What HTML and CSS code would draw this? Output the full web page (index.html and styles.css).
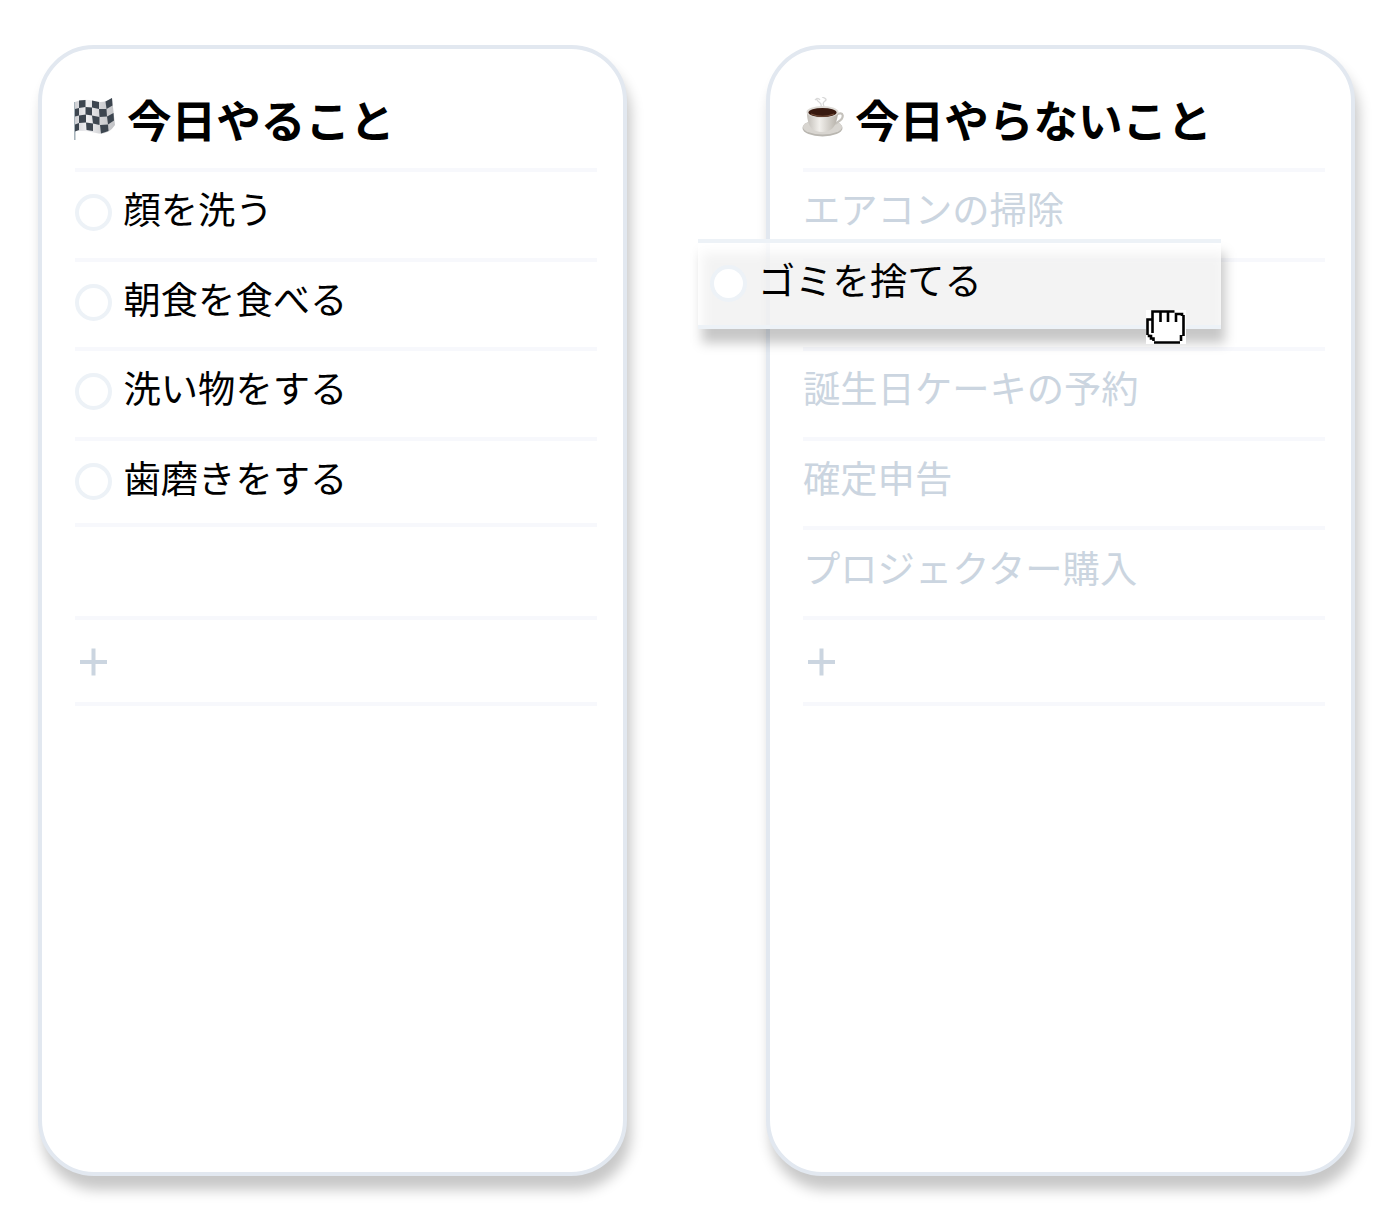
FILE: index.html
```
<!doctype html>
<html lang="ja">
<head>
    <meta charset="utf-8">
    <title>今日やること</title>
    <link rel="stylesheet" href="styles.css">
</head>
<body>
<div class="board">
    <div class="card">
        <h1 class="title">
            <svg class="emoji" viewBox="0 0 42 46">
                <defs>
                    <linearGradient id="cloth" x1="0" x2="1" y1="0" y2="0">
                        <stop offset="0" stop-color="#cfd0d4"/>
                        <stop offset=".3" stop-color="#f0f0f2"/>
                        <stop offset=".65" stop-color="#d2d3d6"/>
                        <stop offset="1" stop-color="#c2c3c6"/>
                    </linearGradient>
                </defs>
                <path d="M.8 5V43" stroke="#9eabb4" stroke-width="1.400"/>
                <path d="M1 5Q10 1 20 4T38 1L41 28Q34 39 22 36T1 34Z" fill="url(#cloth)"/>
                <g fill="#3d4650">
                    <path d="M5 3.500L11.500 3V10L5 11Z"/>
                    <path d="M18 3.500L25 5V12L18 10.500Z"/>
                    <path d="M31.500 4.500L38 1L38.500 8.500L32.500 12Z"/>
                    <path d="M1 12L5 11V18.500L1 19.500Z"/>
                    <path d="M11.500 10L18 10.500V18.500L11.500 17.500Z"/>
                    <path d="M25 12L32.500 12L33 19.500L25.500 20Z"/>
                    <path d="M5 18.500L12 17.500V25.500L5 26Z"/>
                    <path d="M18 18.500L25.500 20V28L19 26.500Z"/>
                    <path d="M33 19.500L39.500 16L40 23.500L34 27.500Z"/>
                    <path d="M1 27.500L5 26V33L1 34.500Z"/>
                    <path d="M12 25.500L19 26.500V34L12.500 33Z"/>
                    <path d="M26 28L34 27.500L34.500 34L27 36.500Z"/>
                </g>
            </svg>
            <span>今日やること</span>
        </h1>
        <ul class="list">
            <li class="item"><span class="check"></span>顔を洗う</li>
            <li class="item"><span class="check"></span>朝食を食べる</li>
            <li class="item"><span class="check"></span>洗い物をする</li>
            <li class="item last"><span class="check"></span>歯磨きをする</li>
            <li class="item blank"></li>
            <li class="item add"><svg class="plus" viewBox="0 0 28 28"><path d="M14.500 .5V27.500M1 14H28"/></svg></li>
        </ul>
    </div>
    <div class="card">
        <h1 class="title">
            <svg class="emoji" viewBox="0 0 42 46">
                <defs>
                    <linearGradient id="cup" x1="0" x2="1" y1="0" y2="0">
                        <stop offset="0" stop-color="#c2beb8"/>
                        <stop offset=".4" stop-color="#f1efeb"/>
                        <stop offset="1" stop-color="#b5b0a8"/>
                    </linearGradient>
                </defs>
                <ellipse cx="20.500" cy="31" rx="20" ry="8.500" fill="#b9b6b0"/>
                <ellipse cx="20.500" cy="30" rx="19.500" ry="7.500" fill="#d8d5d0"/>
                <path d="M34 18C42 13 43 21 36 25Q34 27 31 27" fill="none" stroke="#c5c2bc" stroke-width="2.200"/>
                <path d="M5 15Q5 31 14 34Q20 36 26 34Q35 31 36 15Z" fill="url(#cup)"/>
                <ellipse cx="20.500" cy="15" rx="16" ry="6" fill="#dedbd6"/>
                <ellipse cx="20.500" cy="15.500" rx="14" ry="4.500" fill="#38190f"/>
                <path d="M9 17Q20.500 21.500 32 17" fill="none" stroke="#76503b" stroke-width="1.200"/>
                <path d="M19 10Q20 7 17 5T15 1M22 9Q20 6 23 4T20 0M13 3Q16 0 18 3" fill="none" stroke="#d9d9d9" stroke-width="1.300"/>
            </svg>
            <span>今日やらないこと</span>
        </h1>
        <ul class="list muted">
            <li class="item">エアコンの掃除</li>
            <li class="item"></li>
            <li class="item">誕生日ケーキの予約</li>
            <li class="item">確定申告</li>
            <li class="item">プロジェクター購入</li>
            <li class="item add"><svg class="plus" viewBox="0 0 28 28"><path d="M14.500 .5V27.500M1 14H28"/></svg></li>
        </ul>
    </div>
</div>
<!-- item being dragged between the lists -->
<div class="dragging">
    <span class="check"></span>ゴミを捨てる
    <svg class="cursor" viewBox="0 0 40 34">
        <path d="M0 0H40V34H0Z" fill="#fff"/>
        <path d="M6.500 23V1.500H28.500M14.500 2V12M22 2V12M30 12V4H36V6M37.500 5V26M35 25V31M34 32.500H8M7.500 31V28.500H5V26H3V24.500M1.500 25V9.500H6" fill="none" stroke="#000" stroke-width="2.600"/>
    </svg>
</div>
</body>
</html>
```
FILE: styles.css
```
body {
	margin: 0;
	background: #fff;
	color: #000;
	font-family: "Noto Sans CJK JP", sans-serif;
	font-size: 37.3px;
}
.board {
	display: flex;
	gap: 139px;
	box-sizing: border-box;
	min-height: 1232px;
	padding: 45px 0 0 38px;
}
.card {
	box-sizing: border-box;
	width: 589px;
	height: 1131px;
	padding: 0 26px 0 33px;
	border: 4px solid #e2e8f0;
	border-radius: 56px;
	background: #fff;
	box-shadow: 4px 14px 13px rgba(0, 0, 0, .22);
}
.title {
	display: flex;
	align-items: center;
	gap: 11px;
	height: 119px;
	margin: 0 0 0 -1px;
	font-size: 44.6px;
	font-weight: bold;
	line-height: 60px;
	white-space: nowrap;
}
.title span {
	padding-top: 21px;
}
.emoji {
	width: 42px;
	height: 46px;
	margin-top: 22px;
	flex: none;
}
.list {
	margin: 0;
	padding: 0;
	list-style: none;
	border-top: 4px solid #f7f8fc;
}
.item {
	display: flex;
	align-items: center;
	box-sizing: border-box;
	height: 89.6px;
	padding-bottom: 13px;
	border-bottom: 4px solid #f7f8fc;
	line-height: 54px;
}
.item.last {
	height: 86px;
	padding-bottom: 9px;
}
.item.blank {
	height: 93.2px;
}
.item.add {
	height: 86px;
	padding: 3px 0 0 4px;
}
.muted {
	color: #cbd5e0;
}
.check {
	box-sizing: border-box;
	flex: none;
	width: 37px;
	height: 37px;
	margin: 9px 11.5px 0 0;
	border: 4px solid #edf2f7;
	border-radius: 50%;
	background: #fff;
}
.plus {
	width: 28px;
	height: 28px;
	fill: none;
	stroke: #cbd5e0;
	stroke-width: 4;
}
.dragging {
	position: absolute;
	z-index: 1;
	left: 698px;
	top: 239px;
	display: flex;
	align-items: center;
	box-sizing: border-box;
	width: 523px;
	height: 90px;
	padding: 0 0 10px 11.5px;
	line-height: 54px;
}
/* the shadow shows through the translucent row */
.dragging::before {
	content: "";
	position: absolute;
	z-index: -2;
	left: 4px;
	top: 14px;
	width: 523px;
	height: 90px;
	background: rgba(0, 0, 0, .22);
	filter: blur(6px);
}
.dragging::after {
	content: "";
	position: absolute;
	z-index: -1;
	top: 0;
	right: 0;
	bottom: 0;
	left: 0;
	border-top: 4px solid #edf2f7;
	border-bottom: 4px solid #edf2f7;
	background: rgba(255, 255, 255, .79);
}
.cursor {
	position: absolute;
	left: 448px;
	top: 71px;
	width: 40px;
	height: 34px;
}
```
